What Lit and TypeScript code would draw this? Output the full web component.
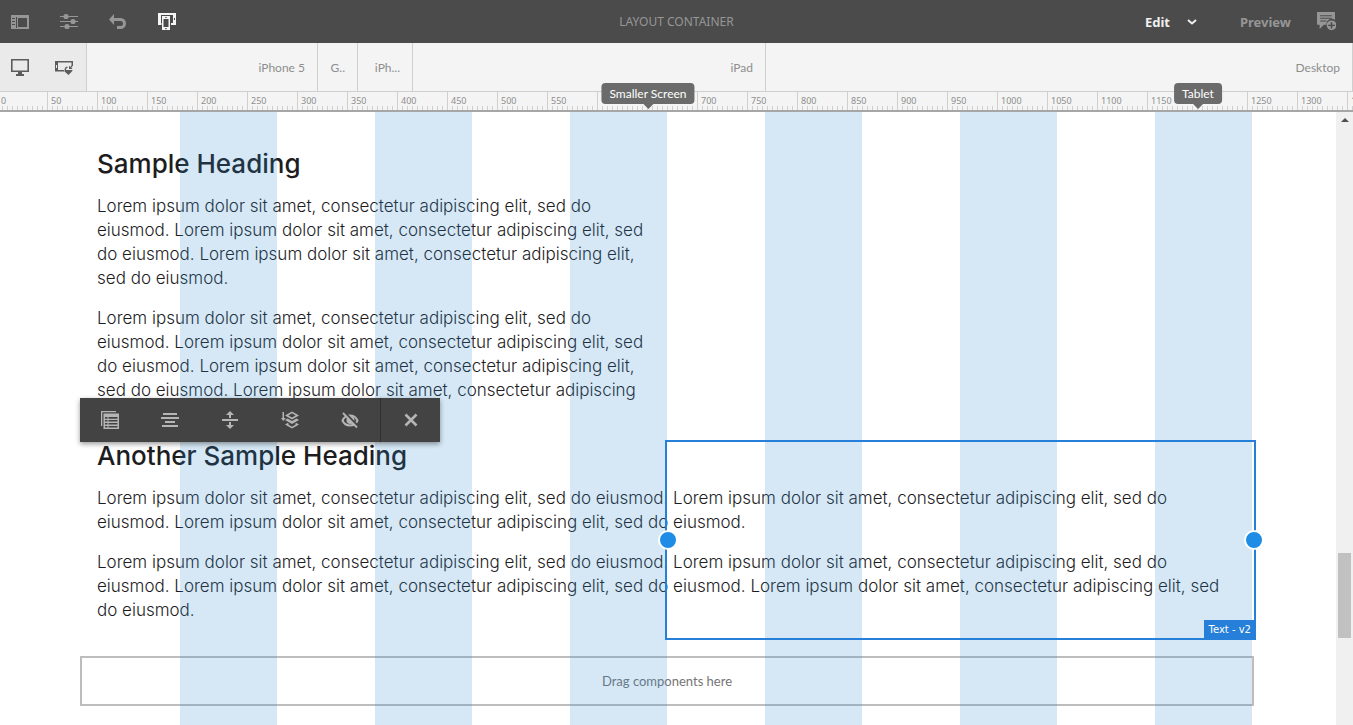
import { LitElement, html, css, svg } from "lit";
import { customElement } from "lit/decorators.js";

const RULER_STEP = 50;
const RULER_SHIFT = 3;

const DEVICES = [
  { name: "iPhone 5", edge: 320 },
  { name: "G..", edge: 360 },
  { name: "iPh...", edge: 415 },
  { name: "iPad", edge: 768 },
];

const BREAKPOINTS = [
  { name: "Smaller Screen", at: 650, covers: [600, 650] },
  { name: "Tablet", at: 1200, covers: [1200] },
];

const COVERED = BREAKPOINTS.flatMap((b) => b.covers);

const icon = (body: unknown, size = 18) =>
  html`<svg viewBox="0 0 18 18" width=${size} height=${size} fill="currentColor" aria-hidden="true">${body}</svg>`;

const ICONS = {
  rail: svg`<path fill-rule="evenodd" d="M0 2h18v14H0zM7 5v9h9V5zM1 5v1h3V5zM1 8v1h3V8zM1 11v1h3v-1zM5 4v11h1V4z"/>`,
  sliders: svg`<path d="M0 3h18v1H0zM0 8h18v1H0zM0 13h18v1H0z"/><circle cx="6" cy="3.5" r="2.6"/><circle cx="13" cy="8.5" r="2.6"/><circle cx="7" cy="13.5" r="2.6"/>`,
  undo: svg`<path d="M5 1v4h6.500a5.500 5.500 0 0 1 0 11H8v-3h3.500a2.500 2.500 0 0 0 0-5H5v4L0 6.500z"/>`,
  emulator: svg`<path fill-rule="evenodd" d="M0 0h18v12h-5v-2h2V2H3v8h1v2H0zM16 5v2h1V5z"/><path fill="#4b4b4b" d="M3.500 2.500h8.500V18H3.500z"/><path fill-rule="evenodd" d="M4 3h8v14H4zM5.500 6v8h5V6zM7 4.200v.9h2v-.9zM7.300 15v1.200h1.400V15z"/>`,
  monitor: svg`<path fill-rule="evenodd" d="M0 0h18v13h-7v2h2v2H5v-2h2v-2H0zM1.600 1.600v9.800h14.800V1.600z"/>`,
  rotate: svg`<path fill-rule="evenodd" d="M0 2h18v5h-1.500V3.500H3V11h6v1.500H0zM1 6v3h1V6z"/><path d="M9.500 11c0-2 1.200-3.300 3-3.500v1.300c-1 .3-1.500 1-1.500 2.200h5.500l1.300.5L13.500 16l-4-3.500z"/><path d="M14 6.500V10h3.500l-1.200-1.200 1.200-1.500-.8-.8-1.400 1.400z"/>`,
  note: svg`<path fill-rule="evenodd" d="M0 0h17v7.500A5 5 0 0 0 9 12H6.500L2.500 16v-4H0zM3 3v1h11V3zM3 5.500v1h11v-1zM3 8v1h6V8z"/><path fill-rule="evenodd" d="M13.800 8a4.600 4.600 0 1 1 0 9.200 4.600 4.600 0 0 1 0-9.200zM13 9.600V12h-2.500v1.300H13v2.400h1.500v-2.400H17V12h-2.500V9.600z"/>`,
  table: svg`<path d="M0 0h15v1.300H1.300V15H0z"/><path fill-rule="evenodd" d="M2.500 2.500H18V18H2.500zM4 6v1.800h2.500V6zM7.500 6v1.800h9V6zM4 9v1.600h2.500V9zM7.500 9v1.600h9V9zM4 12v1.600h2.500V12zM7.500 12v1.600h9V12zM4 15v1.600h2.500V15zM7.500 15v1.600h9V15z"/>`,
  align: svg`<path d="M2 2h14v2H2zM0 6h18v2H0zM4 10h10v2H4zM1 14h16v2H1z"/>`,
  spread: svg`<path d="M1 8h16v2H1zM9 0l4 4h-3v3H8V4H5zM9 18l4-4h-3v-3H8v3H5z"/>`,
  layers: svg`<path d="M1.500 1h1.500v6h1.800L2.300 10 0 7h1.500z"/><path fill-rule="evenodd" d="M11 .5l7 4-7 4-7-4zM11 2.300L7.300 4.500 11 6.600l3.700-2.100z"/><path d="M6.500 7.500L11 10l4.500-2.500L18 9l-7 4-7-4z"/><path fill-rule="evenodd" d="M6.500 12L4 13.500l7 4 7-4-2.500-1.500-1.700 1 1 .5-3.800 2.200-3.800-2.200 1-.5z"/>`,
  hidden: svg`<path fill="none" stroke="currentColor" stroke-width="2" d="M1.500 9.500C3 6 6 4.500 9 4.500s6 1.500 7.500 5C15 13 12 14.500 9 14.500s-6-1.500-7.500-5z"/><circle cx="9.500" cy="9" r="4"/><path d="M3.500 2L17 15.500" stroke="#434343" stroke-width="3"/><path d="M2 2l14 14.500" stroke="currentColor" stroke-width="1.800"/>`,
  close: svg`<path d="M3.500 3.500l11 11M14.500 3.500l-11 11" stroke="currentColor" stroke-width="2.600"/>`,
};

@customElement("editor-top-bar")
class EditorTopBar extends LitElement {
  static styles = css`
    :host {
      display: grid;
      grid-template-columns: 1fr auto 1fr;
      align-items: center;
      height: 43px;
      background: #4b4b4b;
      color: #969696;
      font-size: 12px;
    }
    button {
      display: flex;
      align-items: center;
      border: 0;
      padding: 0;
      background: none;
      color: inherit;
      font: inherit;
    }
    .tools {
      display: flex;
      gap: 31px;
      padding-left: 11px;
    }
    .modes {
      display: flex;
      justify-content: flex-end;
      align-items: center;
      padding-right: 17px;
      font-family: "Noto Sans", sans-serif;
      font-size: 13px;
      font-weight: 700;
    }
    .title {
      font-family: "Noto Sans", sans-serif;
    }
    .edit {
      gap: 17px;
      margin-right: 43px;
      color: #f0f0f0;
    }
    .preview {
      margin-right: 26px;
    }
    .bright {
      color: #f5f5f5;
    }
  `;

  render() {
    return html`
      <div class="tools">
        <button aria-label="Toggle side panel">${icon(ICONS.rail)}</button>
        <button aria-label="Page information">${icon(ICONS.sliders)}</button>
        <button aria-label="Undo">${icon(ICONS.undo)}</button>
        <button class="bright" aria-label="Emulator">${icon(ICONS.emulator)}</button>
      </div>
      <span class="title">LAYOUT CONTAINER</span>
      <div class="modes">
        <button class="edit">
          Edit
          <svg width="10" height="6" viewBox="0 0 10 6" aria-hidden="true">
            <path d="M1 1l4 3.500L9 1" fill="none" stroke="currentColor" stroke-width="2" />
          </svg>
        </button>
        <button class="preview">Preview</button>
        <button aria-label="Annotate">${icon(ICONS.note, 19)}</button>
      </div>
    `;
  }
}

@customElement("device-ruler")
class DeviceRuler extends LitElement {
  static styles = css`
    :host {
      display: block;
      position: relative;
      overflow: hidden;
      z-index: 1;
      background: #f4f4f4;
      color: #8e8e8e;
    }
    .devices {
      display: flex;
      height: 48px;
      font-size: 12px;
    }
    .device {
      box-sizing: border-box;
      display: flex;
      flex: none;
      align-items: center;
      justify-content: flex-end;
      padding-right: 12px;
      border-right: 1px solid #cfcfcf;
      white-space: nowrap;
    }
    .desktop {
      flex: 1;
    }
    .switches {
      box-sizing: border-box;
      display: flex;
      align-items: center;
      gap: 26px;
      width: 87px;
      padding: 2px 0 0 11px;
      border-right: 1px solid #cfcfcf;
      background: #eaeaea;
      color: #5c5c5c;
      position: absolute;
      inset: 0 auto auto 0;
      height: 48px;
    }
    button {
      display: flex;
      border: 0;
      padding: 0;
      background: none;
      color: inherit;
    }
    .scale {
      display: flex;
      height: 18px;
      margin-left: -3px;
      border-top: 1px solid #cfcfcf;
      border-bottom: 2px solid #a6a6a6;
      background: repeating-linear-gradient(90deg, #cfcfcf 0 1px, transparent 1px 5px) 0 100% / 100% 4px no-repeat;
      font-family: "Noto Sans", sans-serif;
    }
    .mark {
      box-sizing: border-box;
      flex: none;
      width: 50px;
      padding-left: 3px;
      border-left: 1px solid #cfcfcf;
      font-size: 9px;
      line-height: 18px;
    }
    .pin {
      position: absolute;
      top: 40px;
      transform: translateX(-50%);
      padding: 0 8px;
      border-radius: 4px;
      background: #6b6b6b;
      color: #fff;
      font-size: 12px;
      line-height: 21px;
      white-space: nowrap;
    }
    .pin::after {
      content: "";
      position: absolute;
      top: 100%;
      left: 50%;
      margin-left: -5px;
      border: 5px solid transparent;
      border-top-color: #6b6b6b;
      border-bottom: 0;
    }
  `;

  render() {
    const marks = Math.ceil((window.innerWidth + RULER_SHIFT) / RULER_STEP);
    return html`
      <div class="devices">
        ${DEVICES.map((device, i) => {
          const start = i ? DEVICES[i - 1].edge : 2;
          return html`<div class="device" style="width:${device.edge - start}px">${device.name}</div>`;
        })}
        <div class="device desktop">Desktop</div>
      </div>
      <div class="switches">
        <button aria-label="Native size">${icon(ICONS.monitor)}</button>
        <button aria-label="Rotate device">${icon(ICONS.rotate)}</button>
      </div>
      <div class="scale">
        ${Array.from({ length: marks }, (_, i) => i * RULER_STEP).map(
          (value) => html`<span class="mark">${COVERED.includes(value) ? "" : value}</span>`
        )}
      </div>
      ${BREAKPOINTS.map((b) => html`<span class="pin" style="left:${b.at - RULER_SHIFT + 1}px">${b.name}</span>`)}
    `;
  }
}

@customElement("component-toolbar")
class ComponentToolbar extends LitElement {
  static styles = css`
    :host {
      display: flex;
      height: 44px;
      background: #434343;
      color: #b5b5b5;
      box-shadow: 0 2px 5px rgba(0, 0, 0, 0.4);
    }
    button {
      box-sizing: border-box;
      display: flex;
      align-items: center;
      justify-content: center;
      width: 60px;
      border: 0;
      padding: 0;
      background: none;
      color: inherit;
    }
    .close {
      border-left: 1px solid #303030;
    }
  `;

  render() {
    return html`
      <button aria-label="Styles">${icon(ICONS.table)}</button>
      <button aria-label="Alignment">${icon(ICONS.align)}</button>
      <button aria-label="Float to new line">${icon(ICONS.spread)}</button>
      <button aria-label="Select parent">${icon(ICONS.layers)}</button>
      <button aria-label="Hide component">${icon(ICONS.hidden)}</button>
      <button class="close" aria-label="Close">${icon(ICONS.close)}</button>
    `;
  }
}

@customElement("app-root")
class AppRoot extends LitElement {
  static styles = css`
    :host {
      display: flex;
      flex-direction: column;
      height: 100vh;
      overflow: hidden;
      background: #fff;
      font-family: Lato, "Noto Sans", sans-serif;
    }
    editor-top-bar,
    device-ruler {
      flex: none;
    }
    .stage {
      display: flex;
      flex: 1;
      min-height: 0;
    }
    .page {
      flex: 1;
      display: flex;
      justify-content: center;
      padding-right: 2px;
      overflow: hidden;
    }
    .container {
      position: relative;
      flex: 0 1 1170px;
      min-width: 0;
    }
    .columns {
      position: absolute;
      inset: 0;
      display: grid;
      grid-template-columns: repeat(12, 1fr);
      pointer-events: none;
    }
    .column:nth-child(even) {
      background: rgba(50, 140, 212, 0.2);
    }
    .block {
      position: relative;
      padding: 0 15px 3px;
      color: #1d1d1f;
      font-family: Inter, sans-serif;
      font-size: 17px;
      font-weight: 350;
      line-height: 24px;
      white-space: nowrap;
    }
    .first {
      padding: 38px 15px 0;
    }
    h2 {
      margin: 0 0 16px;
      font-size: 26px;
      font-weight: 450;
      line-height: 28px;
    }
    p {
      margin: 0 0 16px;
    }
    .selection {
      position: absolute;
      z-index: 1;
      inset: -2px -4px 1px 583px;
      border: 2px solid #2680d9;
    }
    .handle {
      position: absolute;
      top: 50%;
      width: 16px;
      height: 16px;
      border: 2px solid #fff;
      border-radius: 50%;
      background: #1f8ce6;
      transform: translate(-50%, -50%);
    }
    .start {
      left: 1px;
    }
    .end {
      left: 100%;
    }
    .tag {
      position: absolute;
      right: -2px;
      bottom: -2px;
      padding: 0 5px;
      background: #2680d9;
      color: #fff;
      font-family: "DejaVu Sans", sans-serif;
      font-size: 10px;
      font-weight: 400;
      line-height: 20px;
    }
    .tools {
      position: absolute;
      z-index: 2;
      top: -44px;
      left: -2px;
    }
    .drop {
      display: flex;
      align-items: center;
      justify-content: center;
      height: 46px;
      margin: 15px -2px 0;
      border: 2px solid #bdbdbd;
      color: #757575;
      font-size: 13px;
    }
    .scrollbar {
      display: flex;
      flex-direction: column;
      align-items: center;
      width: 17px;
      background: #f0f0f0;
    }
    .up {
      margin-top: 6px;
      border: 4px solid transparent;
      border-top: 0;
      border-bottom-color: #505050;
    }
    .thumb {
      width: 13px;
      height: 85px;
      margin-top: 431px;
      background: #c1c1c1;
    }
  `;

  render() {
    return html`
      <editor-top-bar></editor-top-bar>
      <device-ruler></device-ruler>
      <div class="stage">
        <main class="page">
          <div class="container">
            <section class="block first">
              <h2>Sample Heading</h2>
              <p>
                Lorem ipsum dolor sit amet, consectetur adipiscing elit, sed do<br />
                eiusmod. Lorem ipsum dolor sit amet, consectetur adipiscing elit, sed<br />
                do eiusmod. Lorem ipsum dolor sit amet, consectetur adipiscing elit,<br />
                sed do eiusmod.
              </p>
              <p>
                Lorem ipsum dolor sit amet, consectetur adipiscing elit, sed do<br />
                eiusmod. Lorem ipsum dolor sit amet, consectetur adipiscing elit, sed<br />
                do eiusmod. Lorem ipsum dolor sit amet, consectetur adipiscing elit,<br />
                sed do eiusmod. Lorem ipsum dolor sit amet, consectetur adipiscing<br />
                elit, sed do eiusmod.
              </p>
            </section>
            <section class="block">
              <h2>Another Sample Heading</h2>
              <p>
                Lorem ipsum dolor sit amet, consectetur adipiscing elit, sed do eiusmod. Lorem ipsum dolor sit amet, consectetur adipiscing elit, sed do<br />
                eiusmod. Lorem ipsum dolor sit amet, consectetur adipiscing elit, sed do eiusmod.
              </p>
              <p>
                Lorem ipsum dolor sit amet, consectetur adipiscing elit, sed do eiusmod. Lorem ipsum dolor sit amet, consectetur adipiscing elit, sed do<br />
                eiusmod. Lorem ipsum dolor sit amet, consectetur adipiscing elit, sed do eiusmod. Lorem ipsum dolor sit amet, consectetur adipiscing elit, sed<br />
                do eiusmod.
              </p>
              <div class="selection">
                <span class="handle start"></span>
                <span class="handle end"></span>
                <span class="tag">Text - v2</span>
              </div>
              <component-toolbar class="tools"></component-toolbar>
            </section>
            <div class="drop">Drag components here</div>
            <div class="columns">${Array.from({ length: 12 }, () => html`<div class="column"></div>`)}</div>
          </div>
        </main>
        <div class="scrollbar"><span class="up"></span><span class="thumb"></span></div>
      </div>
    `;
  }
}
